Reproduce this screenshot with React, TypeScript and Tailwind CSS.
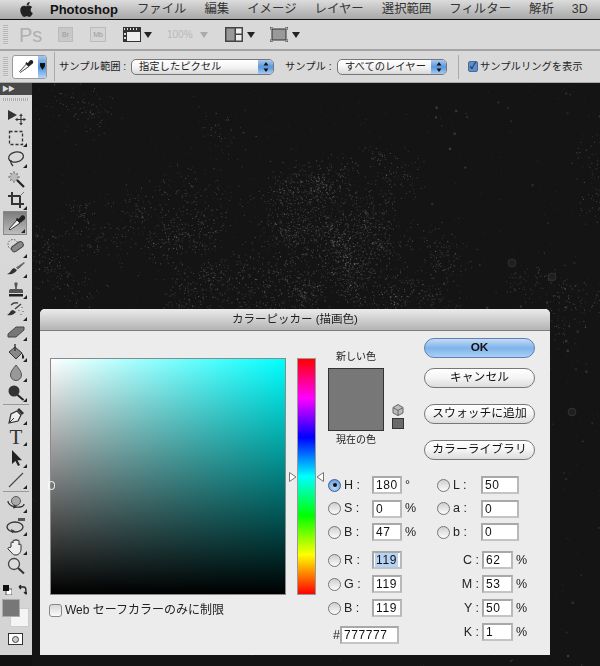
import { useMemo } from "react";
import { FaApple } from "react-icons/fa";

const FONT = "font-['Liberation_Sans','Noto_Sans_CJK_JP',sans-serif]";

const Grip = () => (
  <div className="w-[5px] h-[20px] bg-[repeating-linear-gradient(to_bottom,#b4b4b4_0,#b4b4b4_1px,#dedede_1px,#dedede_2px)]" />
);

const Drop = ({ className = "" }: { className?: string }) => (
  <svg width="8" height="6" viewBox="0 0 8 6" className={className}>
    <path d="M0 0h8L4 6z" fill="currentColor" />
  </svg>
);

const Select = ({ label, width }: { label: string; width: string }) => (
  <div className={`${width} h-[16px] flex rounded-[5px] border border-[#777] overflow-hidden bg-[linear-gradient(to_bottom,#fff,#f4f4f4_50%,#d8d8d8)]`}>
    <span className="flex-1 pl-[7px] text-[10.3px] leading-[14px] text-[#222] whitespace-nowrap">{label}</span>
    <span className="w-[15px] flex flex-col items-center justify-center gap-[2px] bg-[linear-gradient(to_bottom,#a8c8ee,#5c96dc_50%,#a6cbf2)]">
      <svg width="6" height="10" viewBox="0 0 6 10">
        <path d="M3 0l2.5 3.5h-5zM3 10L.5 6.5h5z" fill="#111" />
      </svg>
    </span>
  </div>
);

/* toolbar drawings, all in a 20x20 box */
const S = { fill: "none", stroke: "#333", strokeWidth: 1.3 };
const toolIcons: Record<string, React.ReactNode> = {
  move: (
    <>
      <path d="M2 3l9 5-9 5z" fill="#333" />
      <path d="M15 8v9M10.500 12.500h9" stroke="#333" strokeWidth="1.100" />
      <path d="M15 6.500l-1.800 2.500h3.600zM15 18.500l-1.800-2.500h3.600zM9 12.500l2.500-1.800v3.600zM20 12.500l-2.500-1.800v3.600z" fill="#333" />
    </>
  ),
  marquee: <rect x="3.500" y="3.500" width="13" height="13" fill="none" stroke="#333" strokeWidth="1.300" strokeDasharray="3 2" />,
  lasso: (
    <>
      <ellipse cx="10" cy="8" rx="7.500" ry="5" {...S} transform="rotate(-12 10 8)" />
      <path d="M5 11c-1 3 1 5 2 6" {...S} />
    </>
  ),
  wand: (
    <>
      <circle cx="8" cy="8" r="4" fill="#bbb" stroke="#777" strokeDasharray="1.500 1.500" />
      <path d="M2 8h2M12 8h2M8 2v2M8 12v2M4 4l1.500 1.500M12 4l-1.500 1.500M4 12l1.500-1.500" stroke="#777" />
      <path d="M11 11l7 7" stroke="#222" strokeWidth="2.200" />
    </>
  ),
  crop: (
    <>
      <path d="M6 2v12h12M2 6h12v12" fill="none" stroke="#333" strokeWidth="2" />
      <path d="M14 6l4-4" stroke="#777" />
    </>
  ),
  dropper: (
    <>
      <path d="M4 17l-1-1L11 7l3 3z" fill="#f0f0f0" stroke="#333" />
      <path d="M10.500 5.500l4 4M13 7l3-3.500a1.500 1.500 0 0 1 2 2L15 8z" stroke="#222" strokeWidth="2" fill="#222" />
    </>
  ),
  heal: (
    <>
      <circle cx="7" cy="7.500" r="5" fill="none" stroke="#555" strokeDasharray="1.500 1.500" />
      <rect x="5" y="7" width="13" height="6" rx="3" fill="#888" stroke="#444" transform="rotate(-35 11 10)" />
    </>
  ),
  brush: (
    <>
      <path d="M1 15c5 1 8-1 10-4l-3-2c-3 1-3 5-7 6z" fill="#333" />
      <path d="M10 8.500L18 3l.8 1L12 10.500z" fill="#666" />
    </>
  ),
  stamp: (
    <>
      <path d="M8.500 3a2 2 0 0 1 3 0c.6 1.500-1 3-.7 6h-1.600c.3-3-1.300-4.500-.7-6z" fill="#555" />
      <path d="M3 11c0-1.500 1-2 2-2h10c1 0 2 .5 2 2v2H3z" fill="#555" />
      <rect x="3" y="14" width="14" height="2.500" fill="#222" />
    </>
  ),
  history: (
    <>
      <path d="M1 14c5 1 7-1 9-3l-3-2c-3 0-3 4-6 5z" fill="#333" />
      <path d="M9 8l6-5M12 2c-2-.5-5 0-7 2" stroke="#444" strokeWidth="1.500" fill="none" />
      <path d="M16 6v1M17 10v1M15 13v1M13 9v1" stroke="#555" />
    </>
  ),
  eraser: <path d="M2 12l8-7h8v3l-8 7H2z" fill="#777" stroke="#444" />,
  bucket: (
    <>
      <path d="M3 9l6-5 7 6-6 6z" fill="#888" stroke="#333" />
      <path d="M9 1v7" stroke="#333" strokeWidth="1.400" />
      <path d="M16 10c1.500 2 2.500 3.500 2 5-.3 1-1.800 1-2 0z" fill="#222" />
    </>
  ),
  drop: <path d="M10 2c3 4 5.500 6.500 5.500 10a5.500 5.500 0 0 1-11 0C4.500 8.500 7 6 10 2z" fill="#999" stroke="#555" />,
  burn: (
    <>
      <circle cx="8" cy="8" r="5.500" fill="#333" />
      <path d="M11.500 12l6 5" stroke="#222" strokeWidth="2" />
    </>
  ),
  pen: (
    <>
      <path d="M3 17l2-9 6-3 4 4-3 6z" fill="#eee" stroke="#333" strokeWidth="1.200" />
      <path d="M3 17l5-5" stroke="#333" />
      <path d="M11 4l2-2 5 5-2 2z" fill="#333" />
    </>
  ),
  path: <path d="M6 2v14l3.500-3 2.500 5 2-1-2.500-4.800H16z" fill="#222" />,
  line: <path d="M3 17L17 3" stroke="#444" strokeWidth="1.100" />,
  rotate3d: (
    <>
      <circle cx="10" cy="7" r="4.500" fill="#aaa" stroke="#555" />
      <path d="M2 7c0 4 6 7 12 6 3-.5 4-1.500 4-3" {...S} />
      <path d="M8 10.500l-1 4 4-1z" fill="#333" />
    </>
  ),
  orbit: (
    <>
      <ellipse cx="9" cy="11" rx="8" ry="5" {...S} />
      <path d="M5 13l1 4 3-2z" fill="#333" />
      <rect x="12" y="2" width="7" height="3" fill="#555" />
    </>
  ),
  hand: (
    <path
      d="M5 10V6a1 1 0 0 1 2 0V4a1 1 0 0 1 2 0v-.5a1 1 0 0 1 2 0V4a1 1 0 0 1 2 0v4a1 1 0 0 1 2 0v4c0 3-2 6-5 6H9c-2 0-3-2-4-3l-3-3c-.5-1 .8-2 2-1.500z"
      fill="#eee"
      stroke="#333"
      strokeWidth="1"
    />
  ),
  zoom: (
    <>
      <circle cx="8" cy="8" r="5.500" fill="#ddd" stroke="#444" strokeWidth="1.300" />
      <path d="M12 12l6 5.500" stroke="#333" strokeWidth="2" />
    </>
  ),
};

const tools: { id: string; h: string; fly?: boolean; active?: boolean; text?: string; sepAfter?: boolean }[] = [
  { id: "move", h: "h-[21px]" },
  { id: "marquee", h: "h-[21px]", fly: true },
  { id: "lasso", h: "h-[21px]", fly: true },
  { id: "wand", h: "h-[20px]" },
  { id: "crop", h: "h-[22px]", fly: true },
  { id: "dropper", h: "h-[24px]", fly: true, active: true },
  { id: "heal", h: "h-[24px]", fly: true },
  { id: "brush", h: "h-[20px]", fly: true },
  { id: "stamp", h: "h-[21px]", fly: true },
  { id: "history", h: "h-[22px]", fly: true },
  { id: "eraser", h: "h-[20px]", fly: true },
  { id: "bucket", h: "h-[21px]", fly: true },
  { id: "drop", h: "h-[20px]", fly: true },
  { id: "burn", h: "h-[20px]", fly: true, sepAfter: true },
  { id: "pen", h: "h-[20px]", fly: true },
  { id: "T", h: "h-[21px]", fly: true, text: "T" },
  { id: "path", h: "h-[22px]", fly: true },
  { id: "line", h: "h-[21px]", fly: true, sepAfter: true },
  { id: "rotate3d", h: "h-[21px]", fly: true },
  { id: "orbit", h: "h-[23px]", fly: true },
  { id: "hand", h: "h-[19px]", fly: true },
  { id: "zoom", h: "h-[20px]" },
];

const Toolbar = () => (
  <div className="w-[32px] shrink-0 h-[572px] flex flex-col bg-[linear-gradient(to_bottom,#dadada,#d4d4d4)]">
    <div className="h-[12px] bg-[#484848] text-[#ddd] text-[7px] leading-[12px] pl-[2px] tracking-[-1px]">▶▶</div>
    <div className="h-[11px] pt-[3px] px-[3px]">
      <div className="h-[3px] bg-[repeating-linear-gradient(to_right,#aaa_0,#aaa_1px,#e0e0e0_1px,#e0e0e0_2px)]" />
    </div>
    {tools.map((t) => (
      <div key={t.id}>
        <div
          className={`${t.h} relative flex items-center ${
            t.active ? "ml-[3px] mr-[5px] pl-[2px] border border-[#888] bg-[linear-gradient(to_bottom,#7c7c7c,#bdbdbd)]" : "pl-[6px]"
          }`}
        >
          {t.text ? (
            <span className="w-[20px] text-center text-[21px] leading-[20px] text-[#333] font-['Liberation_Serif',serif]">{t.text}</span>
          ) : (
            <svg width="20" height="20" viewBox="0 0 20 20">{toolIcons[t.id]}</svg>
          )}
          {t.fly && (
            <svg width="4" height="4" viewBox="0 0 4 4" className={`absolute bottom-[1px] ${t.active ? "right-[1px]" : "right-[5px]"}`}>
              <path d="M4 0v4H0z" fill="#222" />
            </svg>
          )}
        </div>
        {t.sepAfter && <div className="h-[1px] mx-[3px] my-[1px] bg-[#999]" />}
      </div>
    ))}
    <div className="h-[23px] pl-[3px] pt-[9px] flex items-start gap-[6px]">
      <svg width="9" height="10" viewBox="0 0 9 10">
        <rect x="3" y="4" width="6" height="6" fill="#fff" stroke="#333" strokeWidth=".8" />
        <rect width="6" height="6" fill="#111" />
      </svg>
      <svg width="9" height="10" viewBox="0 0 9 10">
        <path d="M1 2h5c2 0 2 2 2 6M1 2l2-2M1 2l2 2M8 9L6 7M8 9l2-2" fill="none" stroke="#222" strokeWidth="1.300" />
      </svg>
    </div>
    <div className="pl-[2px] h-[30px]">
      <div className="w-[28px] h-[28px] relative">
        <div className="absolute left-[8px] top-[9px] w-[19px] h-[19px] bg-[#f4f4f4] border border-[#ccc]" />
        <div className="absolute left-0 top-0 w-[18px] h-[18px] bg-[#777] border border-[#aaa]" />
      </div>
    </div>
    <div className="pl-[8px] pt-[4px]">
      <div className="w-[15px] h-[12px] bg-white border border-[#333] flex items-center justify-center">
        <div className="w-[7px] h-[7px] rounded-full bg-[#ccc] border border-[#444]" />
      </div>
    </div>
  </div>
);

/* grunge speckle of the canvas: soft clouds of faint dots, x/y are page coords */
const blotches = [
  [318, 250, 30, 24, 22],
  [300, 225, 20, 16, 8],
  [330, 195, 22, 14, 8],
  [355, 215, 14, 14, 4],
  [290, 290, 14, 14, 4],
  [380, 285, 34, 16, 7],
  [425, 270, 22, 24, 4],
  [175, 215, 24, 16, 5],
  [210, 240, 30, 26, 9],
  [235, 285, 36, 20, 10],
  [110, 235, 24, 12, 3],
  [60, 245, 16, 16, 3],
  [65, 110, 16, 10, 2],
  [225, 110, 10, 10, 1],
  [460, 285, 40, 10, 5],
  [575, 325, 16, 16, 3],
  [585, 190, 12, 14, 2],
];

const Speckle = () => {
  const { dots, rings } = useMemo(() => {
    let seed = 12345;
    const rnd = () => {
      seed = (seed * 16807) % 2147483647;
      return seed / 2147483647;
    };
    const gauss = () => (rnd() + rnd() + rnd() - 1.5) * 1.2;
    const out: { x: number; y: number; o: number; s: number }[] = [];
    for (let i = 0; i < 1100; i++) out.push({ x: rnd() * 568, y: rnd() * 583, o: 0.03 + rnd() * 0.07, s: 1 });
    // lone round flecks, mostly on the right side
    for (let i = 0; i < 110; i++) out.push({ x: 380 + rnd() * 188, y: rnd() * 583, o: 0.06 + rnd() * 0.12, s: 1 + rnd() * 1.5 });
    blotches.forEach(([bx, by, rx, ry, subs]) => {
      for (let s = 0; s < subs; s++) {
        const cx = bx - 32 + gauss() * 2 * rx;
        const cy = by - 83 + gauss() * 2 * ry;
        const r = 5 + rnd() * 9;
        const n = Math.round(r * 5);
        for (let i = 0; i < n; i++) {
          out.push({ x: cx + gauss() * 2 * r, y: cy + gauss() * 2 * r, o: 0.07 + rnd() * 0.2, s: 1 });
        }
      }
    });
    const ringAt = [
      [512, 263, 4],
      [552, 277, 4],
      [572, 412, 4],
    ];
    return { dots: out, rings: ringAt };
  }, []);
  return (
    <svg className="absolute inset-0" width="568" height="583">
      <filter id="soft">
        <feGaussianBlur stdDeviation="0.45" />
      </filter>
      <g filter="url(#soft)">
        {dots.map((d, i) => (
          <rect key={i} x={d.x} y={d.y} width={d.s} height={d.s} fill="#fff" opacity={d.o} />
        ))}
        {rings.map(([x, y, r]) => (
          <circle key={x} cx={x - 32} cy={y - 83} r={r} fill="#fff" fillOpacity=".05" stroke="#fff" strokeOpacity=".09" />
        ))}
      </g>
    </svg>
  );
};

const Radio = ({ on }: { on?: boolean }) => (
  <span
    className={`w-[13px] h-[13px] shrink-0 rounded-full border flex items-center justify-center ${
      on
        ? "border-[#3a5f9a] bg-[radial-gradient(circle_at_50%_70%,#bcd8f6,#5a93d8)]"
        : "border-[#777] bg-[linear-gradient(to_bottom,#cfcfcf,#fbfbfb)]"
    }`}
  >
    {on && <span className="w-[4px] h-[4px] rounded-full bg-[#111]" />}
  </span>
);

const Field = ({ value, width, selected }: { value: string; width: string; selected?: boolean }) => (
  <div className={`${width} h-[18px] shrink-0 bg-white border-2 border-[#a8a8a8] border-b-[#c4c4c4] border-r-[#b8b8b8] pl-[2px] text-[12px] leading-[14px] text-[#111] tracking-[0.6px]`}>
    <span className={selected ? "bg-[#b5d3f5] inline-block w-[23px] -ml-[1px] pl-[1px]" : ""}>{value}</span>
  </div>
);

const ValueRow = ({
  label,
  value,
  unit,
  on,
  selected,
  fieldWidth,
}: {
  label: string;
  value: string;
  unit?: string;
  on?: boolean;
  selected?: boolean;
  fieldWidth: string;
}) => (
  <div className="h-[18px] flex items-center">
    <Radio on={on} />
    <span className="w-[31px] pl-[3px] text-[12.500px] text-[#222] whitespace-nowrap">{label} :</span>
    <Field value={value} width={fieldWidth} selected={selected} />
    {unit && <span className="ml-[3px] text-[12.500px] text-[#222]">{unit}</span>}
  </div>
);

const CmykRow = ({ label, value }: { label: string; value: string }) => (
  <div className="h-[18px] flex items-center">
    <span className="w-[23px] text-right pr-[3px] text-[12.500px] text-[#222] whitespace-nowrap">{label} :</span>
    <Field value={value} width="w-[31px]" />
    <span className="ml-[3px] text-[12.500px] text-[#222]">%</span>
  </div>
);

const DialogButton = ({ label, primary }: { label: string; primary?: boolean }) => (
  <div
    className={`w-[111px] h-[20px] rounded-full border text-center text-[11.800px] leading-[17px] text-[#111] whitespace-nowrap ${
      primary
        ? "font-bold border-[#5f7fb5] bg-[linear-gradient(to_bottom,#c5dcf5,#7fb3ea_50%,#a9d0f5)]"
        : "border-[#777] bg-[linear-gradient(to_bottom,#fff,#f4f4f4_50%,#dcdcdc)]"
    }`}
  >
    {label}
  </div>
);

const ColorDialog = () => (
  <div className="relative w-[510px] h-[346px] rounded-t-[5px] bg-[#ececec] overflow-hidden">
    <div className="h-[22px] border-b border-[#7d7d7d] bg-[linear-gradient(to_bottom,#ebebeb,#b4b4b4)] text-center text-[11.500px] leading-[21px] text-[#222]">
      カラーピッカー (描画色)
    </div>
    <div className="flex pl-[10px] pt-[7px]">
      <div className="w-[236px] pt-[20px]">
        <div className="relative h-[237px] border border-[#8a8a8a] bg-[linear-gradient(to_bottom,transparent,#000),linear-gradient(to_right,#fff,#0ff)]">
          <div className="absolute -left-[3px] top-[122px] w-[7px] h-[9px] rounded-full border border-white" />
        </div>
        <div className="mt-[8px] flex items-center h-[14px]">
          <span className="w-[13px] h-[13px] -ml-[1px] rounded-[3px] border border-[#888] bg-[linear-gradient(to_bottom,#d8d8d8,#fafafa)]" />
          <span className="ml-[3px] text-[12px] text-[#222] whitespace-nowrap">Web セーフカラーのみに制限</span>
        </div>
      </div>
      <div className="ml-[11px] pt-[20px]">
        <div className="relative w-[19px] h-[237px] border border-[#999] bg-[linear-gradient(to_bottom,#f00,#f0f,#00f,#0ff,#0f0,#ff0,#f00)]">
          <svg width="8" height="10" viewBox="0 0 8 10" className="absolute -left-[9px] top-[113px]">
            <path d="M.5.500L7 5 .5 9.500z" fill="#fff" stroke="#777" />
          </svg>
          <svg width="8" height="10" viewBox="0 0 8 10" className="absolute -right-[9px] top-[113px]">
            <path d="M7.500.500L1 5l6.500 4.500z" fill="#fff" stroke="#777" />
          </svg>
        </div>
      </div>
      <div className="ml-[12px] w-[207px]">
        <div className="h-[138px] flex">
          <div className="w-[56px] pt-[12px] flex flex-col items-center">
            <span className="h-[18px] text-[10px] leading-[14px] text-[#222] whitespace-nowrap">新しい色</span>
            <div className="w-[56px] h-[63px] bg-[#777] border border-[#333]" />
            <span className="mt-[2px] text-[10px] leading-[14px] text-[#222] whitespace-nowrap">現在の色</span>
          </div>
          <div className="ml-[8px] pt-[66px] flex flex-col gap-[2px]">
            <svg width="12" height="12" viewBox="0 0 12 12">
              <path d="M6 .5l5 3v5.500l-5 2.500-5-2.500V3.500z" fill="#bbb" stroke="#666" />
              <path d="M1 3.500l5 3 5-3M6 6.500V12" fill="none" stroke="#666" />
            </svg>
            <div className="w-[12px] h-[11px] bg-[#6a6a6a] border border-[#333]" />
          </div>
          <div className="ml-auto flex flex-col">
            <DialogButton label="OK" primary />
            <div className="mt-[10px]"><DialogButton label="キャンセル" /></div>
            <div className="mt-[16px]"><DialogButton label="スウォッチに追加" /></div>
            <div className="mt-[16px]"><DialogButton label="カラーライブラリ" /></div>
          </div>
        </div>
        <div className="flex">
          <div className="w-[109px] flex flex-col">
            <div className="flex flex-col gap-[5.500px]">
              <ValueRow label="H" value="180" unit="°" on fieldWidth="w-[30px]" />
              <ValueRow label="S" value="0" unit="%" fieldWidth="w-[30px]" />
              <ValueRow label="B" value="47" unit="%" fieldWidth="w-[30px]" />
            </div>
            <div className="mt-[10px] flex flex-col gap-[6px]">
              <ValueRow label="R" value="119" selected fieldWidth="w-[30px]" />
              <ValueRow label="G" value="119" fieldWidth="w-[30px]" />
              <ValueRow label="B" value="119" fieldWidth="w-[30px]" />
            </div>
            <div className="mt-[9px] h-[18px] flex items-center">
              <span className="w-[12px] text-[12.500px] text-[#222] text-right">#</span>
              <div className="flex-1">
                <Field value="777777" width="w-[59px]" />
              </div>
            </div>
          </div>
          <div className="flex flex-col">
            <div className="flex flex-col gap-[5.500px]">
              <ValueRow label="L" value="50" fieldWidth="w-[38px]" />
              <ValueRow label="a" value="0" fieldWidth="w-[38px]" />
              <ValueRow label="b" value="0" fieldWidth="w-[38px]" />
            </div>
            <div className="mt-[10px] ml-[22px] flex flex-col gap-[6px]">
              <CmykRow label="C" value="62" />
              <CmykRow label="M" value="53" />
              <CmykRow label="Y" value="50" />
              <CmykRow label="K" value="1" />
            </div>
          </div>
        </div>
      </div>
    </div>
  </div>
);

const menus = ["ファイル", "編集", "イメージ", "レイヤー", "選択範囲", "フィルター", "解析", "3D"];

export default function App() {
  return (
    <div className={`${FONT} w-[600px] h-[666px] overflow-hidden flex flex-col bg-[#111]`}>
      <div className="h-[20px] shrink-0 flex items-center pl-[18px] border-b-[1.500px] border-[#111] bg-[linear-gradient(to_bottom,#dcdcdc,#a8a8a8)] text-[#333]">
        <FaApple className="text-[17px] text-[#222]" />
        <span className="ml-[15px] text-[13px] font-bold text-[#111]">Photoshop</span>
        <div className="ml-[19px] flex gap-[18px] text-[12.400px] whitespace-nowrap">
          {menus.map((m) => (
            <span key={m}>{m}</span>
          ))}
        </div>
      </div>

      <div className="h-[31px] shrink-0 flex items-center pl-[3px] border-b-2 border-[#a4a4a4] bg-[#d9d9d9]">
        <Grip />
        <span className="ml-[11px] w-[24px] text-[20px] text-[#b0b0b0]">Ps</span>
        <span className="ml-[15px] w-[15px] h-[15px] bg-[#c8c8c8] border border-[#bbb] text-[7px] leading-[13px] text-center text-[#999]">Br</span>
        <span className="ml-[17px] w-[16px] h-[15px] bg-[#d4d4d4] border border-[#bbb] text-[7px] leading-[13px] text-center text-[#999]">Mb</span>
        <svg width="18" height="15" viewBox="0 0 18 15" className="ml-[17px]">
          <rect width="18" height="15" fill="#333" />
          <rect x="4" y="5" width="13" height="9" fill="#eee" />
          <path d="M1 1h1v2H1zM4 1h1v2H4zM7 1h1v2H7zM10 1h1v2h-1zM13 1h1v2h-1zM1 6h2v2H1zM1 10h2v2H1z" fill="#ddd" />
        </svg>
        <Drop className="ml-[3px] text-[#222]" />
        <span className="ml-[15px] w-[26px] text-[10px] text-[#b8b8b8]">100%</span>
        <Drop className="ml-[7px] text-[#aaa]" />
        <svg width="18" height="15" viewBox="0 0 18 15" className="ml-[17px]">
          <rect width="18" height="15" fill="#444" />
          <rect x="1.500" y="1.500" width="8" height="12" fill="#999" />
          <rect x="11" y="1.500" width="5.500" height="5" fill="#eee" />
          <rect x="11" y="8" width="5.500" height="5.500" fill="#eee" />
        </svg>
        <Drop className="ml-[4px] text-[#222]" />
        <svg width="18" height="15" viewBox="0 0 18 15" className="ml-[15px]">
          <rect x="2" y="2" width="14" height="11" fill="#999" stroke="#333" />
          <path d="M0 3V0h3M15 0h3v3M18 12v3h-3M3 15H0v-3" fill="none" stroke="#333" />
        </svg>
        <Drop className="ml-[4px] text-[#222]" />
      </div>

      <div className="h-[32px] shrink-0 flex items-center pl-[3px] border-b border-[#aaa] bg-[#d9d9d9]">
        <Grip />
        <div className="ml-[4px] w-[35px] h-[24px] flex rounded-[3px] border border-[#9a9a9a] bg-white overflow-hidden">
          <span className="flex-1 flex items-center justify-center">
            <svg width="17" height="17" viewBox="0 0 20 20">{toolIcons.dropper}</svg>
          </span>
          <span className="w-[8px] flex items-center justify-center bg-[linear-gradient(to_bottom,#9fc6f0,#4f90dc_50%,#b5d6f7)]">
            <svg width="5" height="7" viewBox="0 0 5 7">
              <path d="M0 0h5v3L2.500 7 0 3z" fill="#111" />
            </svg>
          </span>
        </div>
        <div className="ml-[7px] w-[1px] h-[29px] bg-[#aaa]" />
        <span className="ml-[4px] w-[72px] text-[10.300px] text-[#222] whitespace-nowrap">サンプル範囲 :</span>
        <Select label="指定したピクセル" width="w-[143px]" />
        <span className="ml-[11px] w-[52px] text-[10.300px] text-[#222] whitespace-nowrap">サンプル :</span>
        <Select label="すべてのレイヤー" width="w-[110px]" />
        <div className="ml-[11px] w-[1px] h-[24px] bg-[#aaa]" />
        <span className="ml-[9px] w-[10px] h-[11px] rounded-[2px] bg-[#5a8fd0] border border-[#4a6a98] text-[9px] leading-[8px] text-[#111] text-center">✓</span>
        <span className="ml-[2px] text-[10.300px] text-[#222] whitespace-nowrap">サンプルリングを表示</span>
      </div>

      <div className="flex-1 flex min-h-0">
        <Toolbar />
        <div className="relative flex-1 overflow-hidden bg-[#141414] pl-[8px] pt-[226px]">
          <Speckle />
          <ColorDialog />
        </div>
      </div>
    </div>
  );
}
